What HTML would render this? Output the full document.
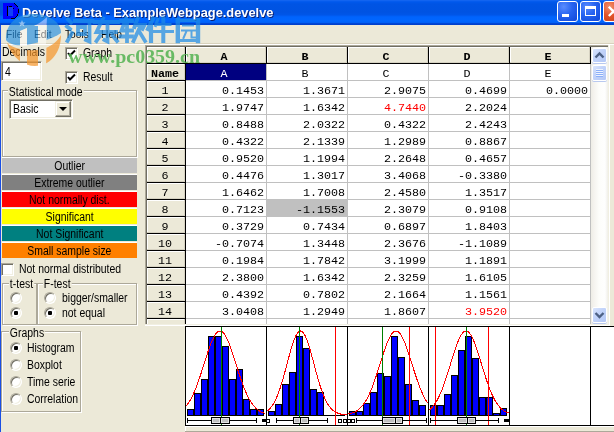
<!DOCTYPE html>
<html><head><meta charset="utf-8">
<style>
*{box-sizing:border-box;margin:0;padding:0}
html,body{width:614px;height:432px;overflow:hidden;background:#ece9d8;position:relative;font-family:"Liberation Sans",sans-serif;font-size:11px;color:#000}
.a{position:absolute}
.t{position:absolute;white-space:nowrap;line-height:13px;font-size:12px;transform:scaleX(0.87);transform-origin:0 0}
#title{left:0;top:0;width:614px;height:25px;background:linear-gradient(to bottom,#1a6af2 0px,#0a5eee 1px,#0058ec 2px,#0054e4 4px,#0053e2 12px,#0056e8 15px,#005ef6 16px,#0064fd 17px,#0066ff 21px,#0060f6 22.5px,#0046d6 23.5px,#003cc8 25px)}
#ttext{left:22px;top:6px;transform:scaleX(0.95);color:#fff;font-weight:bold;font-size:13.5px;letter-spacing:0;text-shadow:1px 1px 0 #0a1e6e}
.wbtn{position:absolute;top:1px;width:21px;height:21px;border:1px solid #fff;border-radius:3px;background:radial-gradient(circle at 30% 25%,#5a8cff 0,#2663f0 45%,#1047d8 100%)}
.grp{position:absolute;border:1px solid #d0d0bf;border-top-color:#d0d0bf;box-shadow:inset 1px 1px 0 #fff}
.bar{position:absolute;left:2px;width:135px;height:17px;border-top:1px solid #fff;border-bottom:1px solid #ece9d8;text-align:center;line-height:15px;font-size:12px}
.bar span{display:inline-block;transform:scaleX(0.87);position:relative;top:1px}
.m{font-size:11px;transform:scaleX(0.93)}
.chk{position:absolute;width:13px;height:13px;background:#fff;border:1px solid;border-color:#aca899 #fff #fff #aca899;box-shadow:inset 1px 1px 0 #716f64,inset -1px -1px 0 #f1efe2}
.rad{position:absolute;width:12px;height:12px;border-radius:50%;background:#fff;border:1px solid;border-color:#aca899 #fff #fff #aca899;box-shadow:inset 1px 1px 0 #716f64,inset -1px -1px 0 #f1efe2}
.rad.on::after{content:"";position:absolute;left:3px;top:3px;width:4px;height:4px;border-radius:1px;background:#000}
#grid{left:145px;top:45px;width:462px;height:280px;overflow:hidden;border-left:1px solid #aca899;border-top:1px solid #aca899;background:#fff}
.cell{position:absolute;font-family:"Liberation Mono",monospace;font-size:11.7px;line-height:13px;white-space:pre;letter-spacing:0}
.b{font-weight:bold}
</style></head><body>
<div id="root" style="position:absolute;left:0;top:0;width:614px;height:432px;overflow:hidden;background:#ece9d8;will-change:transform">
<!-- title bar -->
<div id="title" class="a">
  <svg class="a" style="left:0;top:0" width="24" height="24" shape-rendering="crispEdges"><rect x="3" y="3" width="12" height="1" fill="#0000ff"/><rect x="3" y="4" width="13" height="1" fill="#0000ff"/><rect x="3" y="5" width="14" height="1" fill="#0000ff"/><rect x="3" y="6" width="15" height="1" fill="#0000ff"/><rect x="3" y="7" width="15" height="1" fill="#0000ff"/><rect x="3" y="8" width="16" height="1" fill="#0000ff"/><rect x="3" y="9" width="16" height="1" fill="#0000ff"/><rect x="3" y="10" width="16" height="1" fill="#0000ff"/><rect x="3" y="11" width="16" height="1" fill="#0000ff"/><rect x="3" y="12" width="16" height="1" fill="#0000ff"/><rect x="3" y="13" width="16" height="1" fill="#0000ff"/><rect x="3" y="14" width="15" height="1" fill="#0000ff"/><rect x="3" y="15" width="15" height="1" fill="#0000ff"/><rect x="3" y="16" width="14" height="1" fill="#0000ff"/><rect x="3" y="17" width="13" height="1" fill="#0000ff"/><rect x="3" y="18" width="12" height="1" fill="#0000ff"/><rect x="8" y="7" width="5" height="9" fill="#1040f8"/><rect x="7" y="6" width="1" height="10" fill="#000"/><rect x="9" y="6" width="3" height="1" fill="#000"/><rect x="13" y="8" width="1" height="1" fill="#000"/><rect x="14" y="3" width="1" height="1" fill="#000"/><rect x="15" y="4" width="1" height="1" fill="#000"/><rect x="16" y="5" width="1" height="1" fill="#000"/><rect x="17" y="6" width="1" height="1" fill="#000"/><rect x="18" y="9" width="1" height="4" fill="#000"/><rect x="17" y="14" width="1" height="2" fill="#000"/><rect x="16" y="16" width="1" height="1" fill="#000"/><rect x="15" y="17" width="1" height="1" fill="#000"/><rect x="11" y="18" width="4" height="1" fill="#000"/></svg>
  <div id="ttext" class="t">Develve Beta - ExampleWebpage.develve</div>
  <div class="wbtn" style="left:557px"><div class="a" style="left:4px;top:12px;width:7px;height:3px;background:#fff"></div></div>
  <div class="wbtn" style="left:580px"><div class="a" style="left:4px;top:4px;width:11px;height:10px;border:1px solid #fff;border-top-width:3px"></div></div>
  <div class="wbtn" style="left:603px;background:radial-gradient(circle at 30% 25%,#f39070 0,#e2542a 45%,#c8401a 100%)"><svg class="a" style="left:3px;top:3px" width="14" height="14"><path d="M1.8 1.8 L11 11 M11 1.8 L1.8 11" stroke="#fff" stroke-width="2.3"/></svg></div>
</div>
<!-- left window border -->
<div class="a" style="left:0;top:25px;width:1px;height:407px;background:#1a4fe4"></div>
<!-- menu -->
<div class="t m" style="left:6px;top:28px">File</div>
<div class="t m" style="left:34px;top:28px">Edit</div>
<div class="t m" style="left:65px;top:28px">Tools</div>
<div class="t m" style="left:101px;top:28px">Help</div>
<div class="a" style="left:1px;top:43px;width:613px;height:1px;background:#d8d2bd"></div>
<div class="a" style="left:1px;top:44px;width:613px;height:1px;background:#fff"></div>

<!-- left panel -->
<div class="t" style="left:2px;top:46px">Decimals</div>
<div class="a" style="left:1px;top:61px;width:41px;height:20px;background:#fff;border:1px solid;border-color:#aca899 #fff #fff #aca899;box-shadow:inset 1px 1px 0 #716f64,inset -1px -1px 0 #f1efe2"></div>
<div class="t" style="left:5px;top:66px">4</div>
<div class="chk" style="left:65px;top:47px"></div>
<svg class="a" style="left:65px;top:47px" width="13" height="13"><path d="M3 6 L5 8.5 L10 3.5" stroke="#000" stroke-width="2" fill="none"/></svg>
<div class="t" style="left:83px;top:47px">Graph</div>
<div class="chk" style="left:65px;top:71px"></div>
<svg class="a" style="left:65px;top:71px" width="13" height="13"><path d="M3 6 L5 8.5 L10 3.5" stroke="#000" stroke-width="2" fill="none"/></svg>
<div class="t" style="left:83px;top:71px">Result</div>

<div class="a" style="left:2px;top:90px;width:135px;height:67px;border:1px solid #aca899;box-shadow:1px 1px 0 #fff,inset 1px 1px 0 #fff"></div>
<div class="t" style="left:8px;top:86px;background:#ece9d8;padding:0 1px">Statistical mode</div>
<div class="a" style="left:9px;top:99px;width:64px;height:20px;background:#fff;border:1px solid;border-color:#aca899 #fff #fff #aca899;box-shadow:inset 1px 1px 0 #716f64,inset -1px -1px 0 #f1efe2"></div>
<div class="t" style="left:13px;top:103px">Basic</div>
<div class="a" style="left:55px;top:101px;width:16px;height:16px;background:#ece9d8;border:1px solid;border-color:#f1efe2 #716f64 #716f64 #f1efe2;box-shadow:inset -1px -1px 0 #aca899,inset 1px 1px 0 #fff"></div>
<svg class="a" style="left:55px;top:101px" width="16" height="16"><path d="M4 6 H12 L8 10 Z" fill="#000"/></svg>

<div class="bar" style="top:157px;background:#c0c0c0"><span>Outlier</span></div>
<div class="bar" style="top:174px;background:#808080"><span>Extreme outlier</span></div>
<div class="bar" style="top:191px;background:#ff0000"><span>Not normally dist.</span></div>
<div class="bar" style="top:208px;background:#ffff00"><span>Significant</span></div>
<div class="bar" style="top:225px;background:#008080"><span>Not Significant</span></div>
<div class="bar" style="top:242px;background:#ff8000"><span>Small sample size</span></div>

<div class="chk" style="left:1px;top:263px"></div>
<div class="t" style="left:19px;top:263px">Not normal distributed</div>

<div class="a" style="left:2px;top:283px;width:35px;height:42px;border:1px solid #aca899;box-shadow:1px 1px 0 #fff,inset 1px 1px 0 #fff"></div>
<div class="t" style="left:9px;top:278px;background:#ece9d8;padding:0 1px">t-test</div>
<div class="a" style="left:37px;top:283px;width:100px;height:42px;border:1px solid #aca899;box-shadow:1px 1px 0 #fff,inset 1px 1px 0 #fff"></div>
<div class="t" style="left:43px;top:278px;background:#ece9d8;padding:0 1px">F-test</div>
<div class="rad" style="left:10px;top:292px"></div>
<div class="rad on" style="left:10px;top:307px"></div>
<div class="rad" style="left:44px;top:292px"></div>
<div class="rad on" style="left:44px;top:307px"></div>
<div class="t" style="left:62px;top:292px">bigger/smaller</div>
<div class="t" style="left:62px;top:307px">not equal</div>

<div class="a" style="left:1px;top:331px;width:80px;height:81px;border:1px solid #aca899;box-shadow:1px 1px 0 #fff,inset 1px 1px 0 #fff"></div>
<div class="t" style="left:9px;top:327px;background:#ece9d8;padding:0 1px">Graphs</div>
<div class="rad on" style="left:10px;top:342px"></div>
<div class="rad" style="left:10px;top:359px"></div>
<div class="rad" style="left:10px;top:376px"></div>
<div class="rad" style="left:10px;top:393px"></div>
<div class="t" style="left:27px;top:342px">Histogram</div>
<div class="t" style="left:27px;top:359px">Boxplot</div>
<div class="t" style="left:27px;top:376px">Time serie</div>
<div class="t" style="left:27px;top:393px">Correlation</div>

<!--GRID-->
<div class="a" style="left:145px;top:45px;width:462px;height:280px;background:#fff"></div>
<div class="a" style="left:147px;top:47px;width:38px;height:278px;background:#ece9d8"></div>
<div class="a" style="left:147px;top:47px;width:444px;height:16px;background:#ece9d8"></div>
<div class="a" style="left:186px;top:64px;width:80px;height:16px;background:#000080"></div>
<div class="a" style="left:267px;top:200px;width:80px;height:16px;background:#c0c0c0"></div>
<div class="a" style="left:147px;top:63px;width:444px;height:1px;background:#000"></div>
<div class="a" style="left:186px;top:80px;width:405px;height:1px;background:#c0c0c0"></div>
<div class="a" style="left:147px;top:80px;width:39px;height:1px;background:#000"></div>
<div class="a" style="left:186px;top:97px;width:405px;height:1px;background:#c0c0c0"></div>
<div class="a" style="left:147px;top:97px;width:39px;height:1px;background:#000"></div>
<div class="a" style="left:186px;top:114px;width:405px;height:1px;background:#c0c0c0"></div>
<div class="a" style="left:147px;top:114px;width:39px;height:1px;background:#000"></div>
<div class="a" style="left:186px;top:131px;width:405px;height:1px;background:#c0c0c0"></div>
<div class="a" style="left:147px;top:131px;width:39px;height:1px;background:#000"></div>
<div class="a" style="left:186px;top:148px;width:405px;height:1px;background:#c0c0c0"></div>
<div class="a" style="left:147px;top:148px;width:39px;height:1px;background:#000"></div>
<div class="a" style="left:186px;top:165px;width:405px;height:1px;background:#c0c0c0"></div>
<div class="a" style="left:147px;top:165px;width:39px;height:1px;background:#000"></div>
<div class="a" style="left:186px;top:182px;width:405px;height:1px;background:#c0c0c0"></div>
<div class="a" style="left:147px;top:182px;width:39px;height:1px;background:#000"></div>
<div class="a" style="left:186px;top:199px;width:405px;height:1px;background:#c0c0c0"></div>
<div class="a" style="left:147px;top:199px;width:39px;height:1px;background:#000"></div>
<div class="a" style="left:186px;top:216px;width:405px;height:1px;background:#c0c0c0"></div>
<div class="a" style="left:147px;top:216px;width:39px;height:1px;background:#000"></div>
<div class="a" style="left:186px;top:233px;width:405px;height:1px;background:#c0c0c0"></div>
<div class="a" style="left:147px;top:233px;width:39px;height:1px;background:#000"></div>
<div class="a" style="left:186px;top:250px;width:405px;height:1px;background:#c0c0c0"></div>
<div class="a" style="left:147px;top:250px;width:39px;height:1px;background:#000"></div>
<div class="a" style="left:186px;top:267px;width:405px;height:1px;background:#c0c0c0"></div>
<div class="a" style="left:147px;top:267px;width:39px;height:1px;background:#000"></div>
<div class="a" style="left:186px;top:284px;width:405px;height:1px;background:#c0c0c0"></div>
<div class="a" style="left:147px;top:284px;width:39px;height:1px;background:#000"></div>
<div class="a" style="left:186px;top:301px;width:405px;height:1px;background:#c0c0c0"></div>
<div class="a" style="left:147px;top:301px;width:39px;height:1px;background:#000"></div>
<div class="a" style="left:186px;top:318px;width:405px;height:1px;background:#c0c0c0"></div>
<div class="a" style="left:147px;top:318px;width:39px;height:1px;background:#000"></div>
<div class="a" style="left:185px;top:47px;width:1px;height:16px;background:#000"></div>
<div class="a" style="left:185px;top:47px;width:1px;height:278px;background:#000"></div>
<div class="a" style="left:266px;top:47px;width:1px;height:16px;background:#000"></div>
<div class="a" style="left:266px;top:64px;width:1px;height:261px;background:#c0c0c0"></div>
<div class="a" style="left:347px;top:47px;width:1px;height:16px;background:#000"></div>
<div class="a" style="left:347px;top:64px;width:1px;height:261px;background:#c0c0c0"></div>
<div class="a" style="left:428px;top:47px;width:1px;height:16px;background:#000"></div>
<div class="a" style="left:428px;top:64px;width:1px;height:261px;background:#c0c0c0"></div>
<div class="a" style="left:509px;top:47px;width:1px;height:16px;background:#000"></div>
<div class="a" style="left:509px;top:64px;width:1px;height:261px;background:#c0c0c0"></div>
<div class="a" style="left:590px;top:47px;width:1px;height:16px;background:#000"></div>
<div class="a" style="left:590px;top:64px;width:1px;height:261px;background:#c0c0c0"></div>
<div class="a" style="left:147px;top:47px;width:38px;height:1px;background:#fff"></div>
<div class="a" style="left:147px;top:47px;width:1px;height:16px;background:#fff"></div>
<div class="a" style="left:147px;top:62px;width:38px;height:1px;background:#d6d2c2"></div>
<div class="a" style="left:184px;top:47px;width:1px;height:16px;background:#d6d2c2"></div>
<div class="a" style="left:186px;top:47px;width:80px;height:1px;background:#fff"></div>
<div class="a" style="left:186px;top:47px;width:1px;height:16px;background:#fff"></div>
<div class="a" style="left:186px;top:62px;width:80px;height:1px;background:#d6d2c2"></div>
<div class="a" style="left:265px;top:47px;width:1px;height:16px;background:#d6d2c2"></div>
<div class="a" style="left:267px;top:47px;width:80px;height:1px;background:#fff"></div>
<div class="a" style="left:267px;top:47px;width:1px;height:16px;background:#fff"></div>
<div class="a" style="left:267px;top:62px;width:80px;height:1px;background:#d6d2c2"></div>
<div class="a" style="left:346px;top:47px;width:1px;height:16px;background:#d6d2c2"></div>
<div class="a" style="left:348px;top:47px;width:80px;height:1px;background:#fff"></div>
<div class="a" style="left:348px;top:47px;width:1px;height:16px;background:#fff"></div>
<div class="a" style="left:348px;top:62px;width:80px;height:1px;background:#d6d2c2"></div>
<div class="a" style="left:427px;top:47px;width:1px;height:16px;background:#d6d2c2"></div>
<div class="a" style="left:429px;top:47px;width:80px;height:1px;background:#fff"></div>
<div class="a" style="left:429px;top:47px;width:1px;height:16px;background:#fff"></div>
<div class="a" style="left:429px;top:62px;width:80px;height:1px;background:#d6d2c2"></div>
<div class="a" style="left:508px;top:47px;width:1px;height:16px;background:#d6d2c2"></div>
<div class="a" style="left:510px;top:47px;width:80px;height:1px;background:#fff"></div>
<div class="a" style="left:510px;top:47px;width:1px;height:16px;background:#fff"></div>
<div class="a" style="left:510px;top:62px;width:80px;height:1px;background:#d6d2c2"></div>
<div class="a" style="left:589px;top:47px;width:1px;height:16px;background:#d6d2c2"></div>
<div class="a" style="left:147px;top:64px;width:38px;height:1px;background:#fff"></div>
<div class="a" style="left:147px;top:64px;width:1px;height:16px;background:#fff"></div>
<div class="a" style="left:147px;top:79px;width:38px;height:1px;background:#d6d2c2"></div>
<div class="a" style="left:184px;top:64px;width:1px;height:16px;background:#d6d2c2"></div>
<div class="a" style="left:147px;top:81px;width:38px;height:1px;background:#fff"></div>
<div class="a" style="left:147px;top:81px;width:1px;height:16px;background:#fff"></div>
<div class="a" style="left:147px;top:96px;width:38px;height:1px;background:#d6d2c2"></div>
<div class="a" style="left:184px;top:81px;width:1px;height:16px;background:#d6d2c2"></div>
<div class="a" style="left:147px;top:98px;width:38px;height:1px;background:#fff"></div>
<div class="a" style="left:147px;top:98px;width:1px;height:16px;background:#fff"></div>
<div class="a" style="left:147px;top:113px;width:38px;height:1px;background:#d6d2c2"></div>
<div class="a" style="left:184px;top:98px;width:1px;height:16px;background:#d6d2c2"></div>
<div class="a" style="left:147px;top:115px;width:38px;height:1px;background:#fff"></div>
<div class="a" style="left:147px;top:115px;width:1px;height:16px;background:#fff"></div>
<div class="a" style="left:147px;top:130px;width:38px;height:1px;background:#d6d2c2"></div>
<div class="a" style="left:184px;top:115px;width:1px;height:16px;background:#d6d2c2"></div>
<div class="a" style="left:147px;top:132px;width:38px;height:1px;background:#fff"></div>
<div class="a" style="left:147px;top:132px;width:1px;height:16px;background:#fff"></div>
<div class="a" style="left:147px;top:147px;width:38px;height:1px;background:#d6d2c2"></div>
<div class="a" style="left:184px;top:132px;width:1px;height:16px;background:#d6d2c2"></div>
<div class="a" style="left:147px;top:149px;width:38px;height:1px;background:#fff"></div>
<div class="a" style="left:147px;top:149px;width:1px;height:16px;background:#fff"></div>
<div class="a" style="left:147px;top:164px;width:38px;height:1px;background:#d6d2c2"></div>
<div class="a" style="left:184px;top:149px;width:1px;height:16px;background:#d6d2c2"></div>
<div class="a" style="left:147px;top:166px;width:38px;height:1px;background:#fff"></div>
<div class="a" style="left:147px;top:166px;width:1px;height:16px;background:#fff"></div>
<div class="a" style="left:147px;top:181px;width:38px;height:1px;background:#d6d2c2"></div>
<div class="a" style="left:184px;top:166px;width:1px;height:16px;background:#d6d2c2"></div>
<div class="a" style="left:147px;top:183px;width:38px;height:1px;background:#fff"></div>
<div class="a" style="left:147px;top:183px;width:1px;height:16px;background:#fff"></div>
<div class="a" style="left:147px;top:198px;width:38px;height:1px;background:#d6d2c2"></div>
<div class="a" style="left:184px;top:183px;width:1px;height:16px;background:#d6d2c2"></div>
<div class="a" style="left:147px;top:200px;width:38px;height:1px;background:#fff"></div>
<div class="a" style="left:147px;top:200px;width:1px;height:16px;background:#fff"></div>
<div class="a" style="left:147px;top:215px;width:38px;height:1px;background:#d6d2c2"></div>
<div class="a" style="left:184px;top:200px;width:1px;height:16px;background:#d6d2c2"></div>
<div class="a" style="left:147px;top:217px;width:38px;height:1px;background:#fff"></div>
<div class="a" style="left:147px;top:217px;width:1px;height:16px;background:#fff"></div>
<div class="a" style="left:147px;top:232px;width:38px;height:1px;background:#d6d2c2"></div>
<div class="a" style="left:184px;top:217px;width:1px;height:16px;background:#d6d2c2"></div>
<div class="a" style="left:147px;top:234px;width:38px;height:1px;background:#fff"></div>
<div class="a" style="left:147px;top:234px;width:1px;height:16px;background:#fff"></div>
<div class="a" style="left:147px;top:249px;width:38px;height:1px;background:#d6d2c2"></div>
<div class="a" style="left:184px;top:234px;width:1px;height:16px;background:#d6d2c2"></div>
<div class="a" style="left:147px;top:251px;width:38px;height:1px;background:#fff"></div>
<div class="a" style="left:147px;top:251px;width:1px;height:16px;background:#fff"></div>
<div class="a" style="left:147px;top:266px;width:38px;height:1px;background:#d6d2c2"></div>
<div class="a" style="left:184px;top:251px;width:1px;height:16px;background:#d6d2c2"></div>
<div class="a" style="left:147px;top:268px;width:38px;height:1px;background:#fff"></div>
<div class="a" style="left:147px;top:268px;width:1px;height:16px;background:#fff"></div>
<div class="a" style="left:147px;top:283px;width:38px;height:1px;background:#d6d2c2"></div>
<div class="a" style="left:184px;top:268px;width:1px;height:16px;background:#d6d2c2"></div>
<div class="a" style="left:147px;top:285px;width:38px;height:1px;background:#fff"></div>
<div class="a" style="left:147px;top:285px;width:1px;height:16px;background:#fff"></div>
<div class="a" style="left:147px;top:300px;width:38px;height:1px;background:#d6d2c2"></div>
<div class="a" style="left:184px;top:285px;width:1px;height:16px;background:#d6d2c2"></div>
<div class="a" style="left:147px;top:302px;width:38px;height:1px;background:#fff"></div>
<div class="a" style="left:147px;top:302px;width:1px;height:16px;background:#fff"></div>
<div class="a" style="left:147px;top:317px;width:38px;height:1px;background:#d6d2c2"></div>
<div class="a" style="left:184px;top:302px;width:1px;height:16px;background:#d6d2c2"></div>
<div class="a" style="left:147px;top:319px;width:38px;height:1px;background:#fff"></div>
<div class="a" style="left:147px;top:319px;width:1px;height:6px;background:#fff"></div>
<div class="a" style="left:184px;top:319px;width:1px;height:6px;background:#d6d2c2"></div>
<div class="cell b" style="left:184px;top:51px;width:80px;text-align:center">A</div>
<div class="cell" style="left:184px;top:68px;width:80px;text-align:center;color:#fff">A</div>
<div class="cell b" style="left:265px;top:51px;width:80px;text-align:center">B</div>
<div class="cell" style="left:265px;top:68px;width:80px;text-align:center;color:#000">B</div>
<div class="cell b" style="left:346px;top:51px;width:80px;text-align:center">C</div>
<div class="cell" style="left:346px;top:68px;width:80px;text-align:center;color:#000">C</div>
<div class="cell b" style="left:427px;top:51px;width:80px;text-align:center">D</div>
<div class="cell" style="left:427px;top:68px;width:80px;text-align:center;color:#000">D</div>
<div class="cell b" style="left:508px;top:51px;width:80px;text-align:center">E</div>
<div class="cell" style="left:508px;top:68px;width:80px;text-align:center;color:#000">E</div>
<div class="cell b" style="left:146px;top:68px;width:38px;text-align:center">Name</div>
<div class="cell" style="left:146px;top:85px;width:38px;text-align:center">1</div>
<div class="cell" style="left:186px;top:85px;width:78px;text-align:right">0.1453</div>
<div class="cell" style="left:267px;top:85px;width:78px;text-align:right">1.3671</div>
<div class="cell" style="left:348px;top:85px;width:78px;text-align:right">2.9075</div>
<div class="cell" style="left:429px;top:85px;width:78px;text-align:right">0.4699</div>
<div class="cell" style="left:510px;top:85px;width:78px;text-align:right">0.0000</div>
<div class="cell" style="left:146px;top:102px;width:38px;text-align:center">2</div>
<div class="cell" style="left:186px;top:102px;width:78px;text-align:right">1.9747</div>
<div class="cell" style="left:267px;top:102px;width:78px;text-align:right">1.6342</div>
<div class="cell" style="left:348px;top:102px;width:78px;text-align:right;color:#ff0000">4.7440</div>
<div class="cell" style="left:429px;top:102px;width:78px;text-align:right">2.2024</div>
<div class="cell" style="left:146px;top:119px;width:38px;text-align:center">3</div>
<div class="cell" style="left:186px;top:119px;width:78px;text-align:right">0.8488</div>
<div class="cell" style="left:267px;top:119px;width:78px;text-align:right">2.0322</div>
<div class="cell" style="left:348px;top:119px;width:78px;text-align:right">0.4322</div>
<div class="cell" style="left:429px;top:119px;width:78px;text-align:right">2.4243</div>
<div class="cell" style="left:146px;top:136px;width:38px;text-align:center">4</div>
<div class="cell" style="left:186px;top:136px;width:78px;text-align:right">0.4322</div>
<div class="cell" style="left:267px;top:136px;width:78px;text-align:right">2.1339</div>
<div class="cell" style="left:348px;top:136px;width:78px;text-align:right">1.2989</div>
<div class="cell" style="left:429px;top:136px;width:78px;text-align:right">0.8867</div>
<div class="cell" style="left:146px;top:153px;width:38px;text-align:center">5</div>
<div class="cell" style="left:186px;top:153px;width:78px;text-align:right">0.9520</div>
<div class="cell" style="left:267px;top:153px;width:78px;text-align:right">1.1994</div>
<div class="cell" style="left:348px;top:153px;width:78px;text-align:right">2.2648</div>
<div class="cell" style="left:429px;top:153px;width:78px;text-align:right">0.4657</div>
<div class="cell" style="left:146px;top:170px;width:38px;text-align:center">6</div>
<div class="cell" style="left:186px;top:170px;width:78px;text-align:right">0.4476</div>
<div class="cell" style="left:267px;top:170px;width:78px;text-align:right">1.3017</div>
<div class="cell" style="left:348px;top:170px;width:78px;text-align:right">3.4068</div>
<div class="cell" style="left:429px;top:170px;width:78px;text-align:right">-0.3380</div>
<div class="cell" style="left:146px;top:187px;width:38px;text-align:center">7</div>
<div class="cell" style="left:186px;top:187px;width:78px;text-align:right">1.6462</div>
<div class="cell" style="left:267px;top:187px;width:78px;text-align:right">1.7008</div>
<div class="cell" style="left:348px;top:187px;width:78px;text-align:right">2.4580</div>
<div class="cell" style="left:429px;top:187px;width:78px;text-align:right">1.3517</div>
<div class="cell" style="left:146px;top:204px;width:38px;text-align:center">8</div>
<div class="cell" style="left:186px;top:204px;width:78px;text-align:right">0.7123</div>
<div class="cell" style="left:267px;top:204px;width:78px;text-align:right">-1.1553</div>
<div class="cell" style="left:348px;top:204px;width:78px;text-align:right">2.3079</div>
<div class="cell" style="left:429px;top:204px;width:78px;text-align:right">0.9108</div>
<div class="cell" style="left:146px;top:221px;width:38px;text-align:center">9</div>
<div class="cell" style="left:186px;top:221px;width:78px;text-align:right">0.3729</div>
<div class="cell" style="left:267px;top:221px;width:78px;text-align:right">0.7434</div>
<div class="cell" style="left:348px;top:221px;width:78px;text-align:right">0.6897</div>
<div class="cell" style="left:429px;top:221px;width:78px;text-align:right">1.8403</div>
<div class="cell" style="left:146px;top:238px;width:38px;text-align:center">10</div>
<div class="cell" style="left:186px;top:238px;width:78px;text-align:right">-0.7074</div>
<div class="cell" style="left:267px;top:238px;width:78px;text-align:right">1.3448</div>
<div class="cell" style="left:348px;top:238px;width:78px;text-align:right">2.3676</div>
<div class="cell" style="left:429px;top:238px;width:78px;text-align:right">-1.1089</div>
<div class="cell" style="left:146px;top:255px;width:38px;text-align:center">11</div>
<div class="cell" style="left:186px;top:255px;width:78px;text-align:right">0.1984</div>
<div class="cell" style="left:267px;top:255px;width:78px;text-align:right">1.7842</div>
<div class="cell" style="left:348px;top:255px;width:78px;text-align:right">3.1999</div>
<div class="cell" style="left:429px;top:255px;width:78px;text-align:right">1.1891</div>
<div class="cell" style="left:146px;top:272px;width:38px;text-align:center">12</div>
<div class="cell" style="left:186px;top:272px;width:78px;text-align:right">2.3800</div>
<div class="cell" style="left:267px;top:272px;width:78px;text-align:right">1.6342</div>
<div class="cell" style="left:348px;top:272px;width:78px;text-align:right">2.3259</div>
<div class="cell" style="left:429px;top:272px;width:78px;text-align:right">1.6105</div>
<div class="cell" style="left:146px;top:289px;width:38px;text-align:center">13</div>
<div class="cell" style="left:186px;top:289px;width:78px;text-align:right">0.4392</div>
<div class="cell" style="left:267px;top:289px;width:78px;text-align:right">0.7802</div>
<div class="cell" style="left:348px;top:289px;width:78px;text-align:right">2.1664</div>
<div class="cell" style="left:429px;top:289px;width:78px;text-align:right">1.1561</div>
<div class="cell" style="left:146px;top:306px;width:38px;text-align:center">14</div>
<div class="cell" style="left:186px;top:306px;width:78px;text-align:right">3.0408</div>
<div class="cell" style="left:267px;top:306px;width:78px;text-align:right">1.2949</div>
<div class="cell" style="left:348px;top:306px;width:78px;text-align:right">1.8607</div>
<div class="cell" style="left:429px;top:306px;width:78px;text-align:right;color:#ff0000">3.9520</div>
<div class="a" style="left:145px;top:45px;width:464px;height:1px;background:#aca899"></div>
<div class="a" style="left:145px;top:45px;width:1px;height:280px;background:#aca899"></div>
<div class="a" style="left:146px;top:46px;width:462px;height:1px;background:#716f64"></div>
<div class="a" style="left:146px;top:46px;width:1px;height:279px;background:#716f64"></div>
<!--/GRID-->
<!--SCROLL-->
<div class="a" style="left:591px;top:47px;width:17px;height:277px;background:linear-gradient(to right,#eeede5 0,#f3f1ec 2px,#fdfdfa 8px,#fefefe 14px,#f0efe8 17px)"></div>
<div class="a" style="left:592px;top:48px;width:15px;height:15px;border-radius:2px;border:1px solid #fff;background:linear-gradient(135deg,#dae5fc 0,#c3d4fa 40%,#b4c8f6 100%);box-shadow:0 1px 0 #b9c9ef"></div>
<svg class="a" style="left:592px;top:48px" width="15" height="15"><path d="M3.5 9.5 L7.5 5.5 L11.5 9.5" stroke="#4d6185" stroke-width="2.4" fill="none"/></svg>
<div class="a" style="left:592px;top:65px;width:15px;height:16px;border-radius:2px;border:1px solid #fff;background:linear-gradient(135deg,#dae5fc 0,#c3d4fa 40%,#b4c8f6 100%);box-shadow:0 1px 0 #b9c9ef"></div>
<div class="a" style="left:596px;top:69px;width:7px;height:1px;background:#eef3fe;box-shadow:0 1px 0 #8cb0f8,0 2px 0 #eef3fe,0 3px 0 #8cb0f8,0 4px 0 #eef3fe,0 5px 0 #8cb0f8,0 6px 0 #eef3fe,0 7px 0 #8cb0f8"></div>
<div class="a" style="left:592px;top:307px;width:15px;height:16px;border-radius:2px;border:1px solid #fff;background:linear-gradient(135deg,#dae5fc 0,#c3d4fa 40%,#b4c8f6 100%);box-shadow:0 1px 0 #b9c9ef"></div>
<svg class="a" style="left:592px;top:307px" width="15" height="16"><path d="M3.5 6 L7.5 10 L11.5 6" stroke="#4d6185" stroke-width="2.4" fill="none"/></svg>
<div class="a" style="left:608px;top:45px;width:1px;height:280px;background:#f1efe2"></div>
<div class="a" style="left:609px;top:45px;width:1px;height:281px;background:#fff"></div>
<div class="a" style="left:145px;top:324px;width:464px;height:1px;background:#f1efe2"></div>
<div class="a" style="left:145px;top:325px;width:465px;height:1px;background:#fff"></div>

<!--/SCROLL-->
<!--CHART-->
<svg class="a" style="left:0;top:0" width="614" height="432" shape-rendering="crispEdges">
<rect x="185" y="326" width="429" height="100" fill="#fff"/>
<rect x="185" y="426" width="429" height="1" fill="#fff"/>
<rect x="185" y="426" width="1" height="6" fill="#fff"/>
<rect x="185" y="431" width="429" height="1" fill="#aca899"/>
<rect x="187.5" y="409.5" width="6" height="6" fill="#0000ff" stroke="#000" stroke-width="1"/>
<rect x="194.5" y="393.5" width="6" height="22" fill="#0000ff" stroke="#000" stroke-width="1"/>
<rect x="201.5" y="379.5" width="6" height="36" fill="#0000ff" stroke="#000" stroke-width="1"/>
<rect x="208.5" y="336.5" width="6" height="79" fill="#0000ff" stroke="#000" stroke-width="1"/>
<rect x="215.5" y="336.5" width="6" height="79" fill="#0000ff" stroke="#000" stroke-width="1"/>
<rect x="222.5" y="346.5" width="6" height="69" fill="#0000ff" stroke="#000" stroke-width="1"/>
<rect x="229.5" y="379.5" width="6" height="36" fill="#0000ff" stroke="#000" stroke-width="1"/>
<rect x="236.5" y="369.5" width="6" height="46" fill="#0000ff" stroke="#000" stroke-width="1"/>
<rect x="243.5" y="399.5" width="6" height="16" fill="#0000ff" stroke="#000" stroke-width="1"/>
<rect x="250.5" y="409.5" width="6" height="6" fill="#0000ff" stroke="#000" stroke-width="1"/>
<rect x="257.5" y="409.5" width="6" height="6" fill="#0000ff" stroke="#000" stroke-width="1"/>
<polyline points="186.5,405.6 187.5,404.3 188.5,402.9 189.5,401.3 190.5,399.7 191.5,397.8 192.5,395.8 193.5,393.7 194.5,391.4 195.5,389.0 196.5,386.4 197.5,383.7 198.5,380.9 199.5,378.0 200.5,375.0 201.5,372.0 202.5,368.8 203.5,365.6 204.5,362.5 205.5,359.3 206.5,356.2 207.5,353.1 208.5,350.1 209.5,347.3 210.5,344.6 211.5,342.1 212.5,339.7 213.5,337.7 214.5,335.8 215.5,334.3 216.5,333.0 217.5,332.0 218.5,331.4 219.5,331.0 220.5,331.0 221.5,331.4 222.5,332.0 223.5,333.0 224.5,334.3 225.5,335.8 226.5,337.7 227.5,339.7 228.5,342.1 229.5,344.6 230.5,347.3 231.5,350.1 232.5,353.1 233.5,356.2 234.5,359.3 235.5,362.5 236.5,365.6 237.5,368.8 238.5,372.0 239.5,375.0 240.5,378.0 241.5,380.9 242.5,383.7 243.5,386.4 244.5,389.0 245.5,391.4 246.5,393.7 247.5,395.8 248.5,397.8 249.5,399.7 250.5,401.3 251.5,402.9 252.5,404.3 253.5,405.6 254.5,406.8 255.5,407.8 256.5,408.8 257.5,409.6 258.5,410.4 259.5,411.0 260.5,411.6 261.5,412.1 262.5,412.5 263.5,412.9 264.5,413.2 265.5,413.5" fill="none" stroke="#ff0000" stroke-width="1" shape-rendering="crispEdges"/>
<rect x="221" y="327" width="1" height="98" fill="#008000"/>
<rect x="187" y="420" width="70" height="1" fill="#000"/>
<rect x="187" y="418" width="1" height="5" fill="#000"/>
<rect x="256" y="418" width="1" height="5" fill="#000"/>
<rect x="211" y="417" width="19" height="7" fill="#000"/>
<rect x="212" y="418" width="8" height="5" fill="#e4e4e4"/>
<rect x="213" y="419" width="6" height="3" fill="#c0c0c0"/>
<rect x="221" y="418" width="8" height="5" fill="#e4e4e4"/>
<rect x="222" y="419" width="6" height="3" fill="#c0c0c0"/>
<rect x="262" y="419" width="4" height="3" fill="#000"/>
<rect x="268.5" y="411.5" width="6" height="4" fill="#0000ff" stroke="#000" stroke-width="1"/>
<rect x="275.5" y="404.5" width="6" height="11" fill="#0000ff" stroke="#000" stroke-width="1"/>
<rect x="282.5" y="384.5" width="6" height="31" fill="#0000ff" stroke="#000" stroke-width="1"/>
<rect x="289.5" y="372.5" width="6" height="43" fill="#0000ff" stroke="#000" stroke-width="1"/>
<rect x="296.5" y="336.5" width="6" height="79" fill="#0000ff" stroke="#000" stroke-width="1"/>
<rect x="303.5" y="348.5" width="6" height="67" fill="#0000ff" stroke="#000" stroke-width="1"/>
<rect x="310.5" y="389.5" width="6" height="26" fill="#0000ff" stroke="#000" stroke-width="1"/>
<rect x="317.5" y="392.5" width="6" height="23" fill="#0000ff" stroke="#000" stroke-width="1"/>
<rect x="324" y="415" width="7" height="1" fill="#000"/>
<rect x="331" y="415" width="7" height="1" fill="#000"/>
<rect x="338" y="415" width="7" height="1" fill="#000"/>
<polyline points="267.5,410.8 268.5,409.9 269.5,409.0 270.5,407.9 271.5,406.6 272.5,405.2 273.5,403.6 274.5,401.9 275.5,399.9 276.5,397.7 277.5,395.3 278.5,392.7 279.5,389.9 280.5,387.0 281.5,383.8 282.5,380.5 283.5,377.0 284.5,373.4 285.5,369.7 286.5,365.9 287.5,362.2 288.5,358.4 289.5,354.7 290.5,351.2 291.5,347.7 292.5,344.5 293.5,341.6 294.5,338.9 295.5,336.6 296.5,334.6 297.5,333.0 298.5,331.9 299.5,331.2 300.5,331.0 301.5,331.2 302.5,331.9 303.5,333.0 304.5,334.6 305.5,336.6 306.5,338.9 307.5,341.6 308.5,344.5 309.5,347.7 310.5,351.2 311.5,354.7 312.5,358.4 313.5,362.2 314.5,365.9 315.5,369.7 316.5,373.4 317.5,377.0 318.5,380.5 319.5,383.8 320.5,387.0 321.5,389.9 322.5,392.7 323.5,395.3 324.5,397.7 325.5,399.9 326.5,401.9 327.5,403.6 328.5,405.2 329.5,406.6 330.5,407.9 331.5,409.0 332.5,409.9 333.5,410.8 334.5,411.5 335.5,412.1 336.5,412.6 337.5,413.0 338.5,413.4 339.5,413.7 340.5,414.0 341.5,414.2 342.5,414.3 343.5,414.5 344.5,414.6 345.5,414.7 346.5,414.7" fill="none" stroke="#ff0000" stroke-width="1" shape-rendering="crispEdges"/>
<rect x="335" y="327" width="1" height="98" fill="#ff0000"/>
<rect x="299" y="327" width="1" height="98" fill="#008000"/>
<rect x="276" y="420" width="52" height="1" fill="#000"/>
<rect x="276" y="418" width="1" height="5" fill="#000"/>
<rect x="327" y="418" width="1" height="5" fill="#000"/>
<rect x="293" y="417" width="16" height="7" fill="#000"/>
<rect x="294" y="418" width="6" height="5" fill="#e4e4e4"/>
<rect x="295" y="419" width="4" height="3" fill="#c0c0c0"/>
<rect x="301" y="418" width="7" height="5" fill="#e4e4e4"/>
<rect x="302" y="419" width="5" height="3" fill="#c0c0c0"/>
<rect x="266.5" y="419.5" width="3" height="3" fill="#fff" stroke="#000" stroke-width="1"/>
<rect x="338.5" y="419.5" width="3" height="3" fill="#fff" stroke="#000" stroke-width="1"/>
<rect x="343.5" y="419.5" width="3" height="3" fill="#fff" stroke="#000" stroke-width="1"/>
<rect x="349.5" y="411.5" width="6" height="4" fill="#0000ff" stroke="#000" stroke-width="1"/>
<rect x="356.5" y="411.5" width="6" height="4" fill="#0000ff" stroke="#000" stroke-width="1"/>
<rect x="363.5" y="403.5" width="6" height="12" fill="#0000ff" stroke="#000" stroke-width="1"/>
<rect x="370.5" y="392.5" width="6" height="23" fill="#0000ff" stroke="#000" stroke-width="1"/>
<rect x="377.5" y="373.5" width="6" height="42" fill="#0000ff" stroke="#000" stroke-width="1"/>
<rect x="384.5" y="376.5" width="6" height="39" fill="#0000ff" stroke="#000" stroke-width="1"/>
<rect x="391.5" y="336.5" width="6" height="79" fill="#0000ff" stroke="#000" stroke-width="1"/>
<rect x="398.5" y="357.5" width="6" height="58" fill="#0000ff" stroke="#000" stroke-width="1"/>
<rect x="405.5" y="384.5" width="6" height="31" fill="#0000ff" stroke="#000" stroke-width="1"/>
<rect x="412.5" y="400.5" width="6" height="15" fill="#0000ff" stroke="#000" stroke-width="1"/>
<rect x="419.5" y="405.5" width="6" height="10" fill="#0000ff" stroke="#000" stroke-width="1"/>
<polyline points="348.5,414.0 349.5,413.8 350.5,413.5 351.5,413.2 352.5,412.9 353.5,412.5 354.5,412.1 355.5,411.6 356.5,411.0 357.5,410.4 358.5,409.6 359.5,408.8 360.5,407.8 361.5,406.8 362.5,405.6 363.5,404.3 364.5,402.9 365.5,401.3 366.5,399.7 367.5,397.8 368.5,395.8 369.5,393.7 370.5,391.4 371.5,389.0 372.5,386.4 373.5,383.7 374.5,380.9 375.5,378.0 376.5,375.0 377.5,372.0 378.5,368.8 379.5,365.6 380.5,362.5 381.5,359.3 382.5,356.2 383.5,353.1 384.5,350.1 385.5,347.3 386.5,344.6 387.5,342.1 388.5,339.7 389.5,337.7 390.5,335.8 391.5,334.3 392.5,333.0 393.5,332.0 394.5,331.4 395.5,331.0 396.5,331.0 397.5,331.4 398.5,332.0 399.5,333.0 400.5,334.3 401.5,335.8 402.5,337.7 403.5,339.7 404.5,342.1 405.5,344.6 406.5,347.3 407.5,350.1 408.5,353.1 409.5,356.2 410.5,359.3 411.5,362.5 412.5,365.6 413.5,368.8 414.5,372.0 415.5,375.0 416.5,378.0 417.5,380.9 418.5,383.7 419.5,386.4 420.5,389.0 421.5,391.4 422.5,393.7 423.5,395.8 424.5,397.8 425.5,399.7 426.5,401.3 427.5,402.9" fill="none" stroke="#ff0000" stroke-width="1" shape-rendering="crispEdges"/>
<rect x="409" y="327" width="1" height="98" fill="#ff0000"/>
<rect x="382" y="327" width="1" height="98" fill="#008000"/>
<rect x="356" y="420" width="71" height="1" fill="#000"/>
<rect x="356" y="418" width="1" height="5" fill="#000"/>
<rect x="426" y="418" width="1" height="5" fill="#000"/>
<rect x="382" y="417" width="21" height="7" fill="#000"/>
<rect x="383" y="418" width="12" height="5" fill="#e4e4e4"/>
<rect x="384" y="419" width="10" height="3" fill="#c0c0c0"/>
<rect x="396" y="418" width="6" height="5" fill="#e4e4e4"/>
<rect x="397" y="419" width="4" height="3" fill="#c0c0c0"/>
<rect x="347.5" y="419.5" width="3" height="3" fill="#fff" stroke="#000" stroke-width="1"/>
<rect x="351.5" y="419.5" width="3" height="3" fill="#fff" stroke="#000" stroke-width="1"/>
<rect x="430.5" y="405.5" width="6" height="10" fill="#0000ff" stroke="#000" stroke-width="1"/>
<rect x="437.5" y="405.5" width="6" height="10" fill="#0000ff" stroke="#000" stroke-width="1"/>
<rect x="444.5" y="394.5" width="6" height="21" fill="#0000ff" stroke="#000" stroke-width="1"/>
<rect x="451.5" y="375.5" width="6" height="40" fill="#0000ff" stroke="#000" stroke-width="1"/>
<rect x="458.5" y="350.5" width="6" height="65" fill="#0000ff" stroke="#000" stroke-width="1"/>
<rect x="465.5" y="336.5" width="6" height="79" fill="#0000ff" stroke="#000" stroke-width="1"/>
<rect x="472.5" y="358.5" width="6" height="57" fill="#0000ff" stroke="#000" stroke-width="1"/>
<rect x="479.5" y="397.5" width="6" height="18" fill="#0000ff" stroke="#000" stroke-width="1"/>
<rect x="486.5" y="397.5" width="6" height="18" fill="#0000ff" stroke="#000" stroke-width="1"/>
<rect x="493.5" y="413.5" width="6" height="2" fill="#0000ff" stroke="#000" stroke-width="1"/>
<rect x="500.5" y="408.5" width="6" height="7" fill="#0000ff" stroke="#000" stroke-width="1"/>
<polyline points="429.5,409.8 430.5,408.9 431.5,407.9 432.5,406.9 433.5,405.7 434.5,404.3 435.5,402.9 436.5,401.3 437.5,399.5 438.5,397.6 439.5,395.5 440.5,393.3 441.5,390.9 442.5,388.4 443.5,385.7 444.5,382.9 445.5,380.0 446.5,376.9 447.5,373.8 448.5,370.6 449.5,367.3 450.5,364.1 451.5,360.8 452.5,357.5 453.5,354.3 454.5,351.2 455.5,348.2 456.5,345.4 457.5,342.7 458.5,340.3 459.5,338.1 460.5,336.1 461.5,334.5 462.5,333.1 463.5,332.1 464.5,331.4 465.5,331.0 466.5,331.0 467.5,331.4 468.5,332.1 469.5,333.1 470.5,334.5 471.5,336.1 472.5,338.1 473.5,340.3 474.5,342.7 475.5,345.4 476.5,348.2 477.5,351.2 478.5,354.3 479.5,357.5 480.5,360.8 481.5,364.1 482.5,367.3 483.5,370.6 484.5,373.8 485.5,376.9 486.5,380.0 487.5,382.9 488.5,385.7 489.5,388.4 490.5,390.9 491.5,393.3 492.5,395.5 493.5,397.6 494.5,399.5 495.5,401.3 496.5,402.9 497.5,404.3 498.5,405.7 499.5,406.9 500.5,407.9 501.5,408.9 502.5,409.8 503.5,410.5 504.5,411.2 505.5,411.7 506.5,412.2 507.5,412.7 508.5,413.0" fill="none" stroke="#ff0000" stroke-width="1" shape-rendering="crispEdges"/>
<rect x="435" y="327" width="1" height="98" fill="#ff0000"/>
<rect x="488" y="327" width="1" height="98" fill="#ff0000"/>
<rect x="466" y="327" width="1" height="98" fill="#008000"/>
<rect x="430" y="420" width="69" height="1" fill="#000"/>
<rect x="430" y="418" width="1" height="5" fill="#000"/>
<rect x="498" y="418" width="1" height="5" fill="#000"/>
<rect x="457" y="417" width="19" height="7" fill="#000"/>
<rect x="458" y="418" width="9" height="5" fill="#e4e4e4"/>
<rect x="459" y="419" width="7" height="3" fill="#c0c0c0"/>
<rect x="468" y="418" width="7" height="5" fill="#e4e4e4"/>
<rect x="469" y="419" width="5" height="3" fill="#c0c0c0"/>
<rect x="504" y="419" width="5" height="3" fill="#000"/>
<rect x="185" y="326" width="429" height="1" fill="#000"/>
<rect x="185" y="425" width="429" height="1" fill="#000"/>
<rect x="185" y="326" width="1" height="100" fill="#000"/>
<rect x="266" y="326" width="1" height="100" fill="#000"/>
<rect x="347" y="326" width="1" height="100" fill="#000"/>
<rect x="428" y="326" width="1" height="100" fill="#000"/>
<rect x="509" y="326" width="1" height="100" fill="#000"/>
<rect x="590" y="326" width="1" height="100" fill="#000"/>
</svg>
<!--/CHART-->
<!--WM-->
<svg class="a" style="left:0;top:0" width="614" height="432">
<defs><mask id="bars"><rect x="0" y="0" width="80" height="80" fill="#fff"/><path d="M20 31 L27 28 L27 70 L20 70 Z M47 17 C43 21 38 24 34 26 L38 26 L38 70 L46 70 Z" fill="#000"/></mask></defs>
<g mask="url(#bars)">
<path d="M6 40 C5 24 17 14 33 14 C49 14 61 22 61 33 C52 39 38 43 25 45 C15 46 9 44 6 40 Z" fill="#2a90e0" opacity="0.68"/>
<path d="M7 43 C12 58 24 66 35 66 C50 66 61 53 61 35 C56 44 47 49 37 50 C26 51 14 49 7 43 Z" fill="#f4962c" opacity="0.72"/>
</g>
<g opacity="0.5" fill="#fff">
<path d="M20 31 L27 28 L27 46 L20 46 Z"/>
<path d="M47 17 C43 21 38 24 34 26 L38 26 L38 44 L46 44 Z"/>
<path d="M22 20 l1 2.5 l2.5 0 l-2 1.5 l1 2.5 l-2.5 -1.5 l-2.5 1.5 l1 -2.5 l-2 -1.5 l2.5 0 Z"/>
</g>
<g opacity="0.72" stroke="#1e8ce6" stroke-width="3.8" fill="none" stroke-linecap="square" stroke-linejoin="miter">
<path d="M68 19.5 L71 22.5 M67 26.5 L70 29 M67.5 41 L72 33"/>
<path d="M75 21 H92.5 M89.5 21 V41.5 L86 40"/>
<path d="M78 27 H85 V34 H78 Z"/>
<path d="M94.5 22 H118 M103 18.5 L96.5 32 H116 M107.5 23 V41.5 L104.5 40 M100 36 L96.5 41 M112.5 35.5 L117 41"/>
<path d="M121 21 H132 M126 18.5 L121.5 30.5 H132 M127 25 V41 M120.5 36.5 H132"/>
<path d="M137.5 18.5 L134.5 27 M135.5 25 H144.5 L142.5 29 M139.5 28 L133.5 41 M139.5 32 L145 41"/>
<path d="M153 18.5 L148 29 M151 25 V41" stroke-width="4.2"/>
<path d="M158 19 L155.5 25.5 M156 24.5 H170 M154 31.5 H172.5" stroke-width="3"/><path d="M163.3 18.5 V41" stroke-width="4"/>
<path d="M177.8 20 V41 M198 20 V41" stroke-width="4.4"/><path d="M178 20.5 H198 M178 40.5 H198" stroke-width="2.8"/><path d="M183 25.5 H193 M182 30.5 H195 M186.5 31 L183.5 38 M191.5 31 V37.5 H195" stroke-width="2"/>
</g>
<text x="68" y="63" font-family="Liberation Serif" font-weight="bold" font-size="18.5" fill="#58b455" opacity="0.88" transform="translate(68 0) scale(1.08 1) translate(-68 0)">www.pc0359.cn</text>
</svg>

<!--/WM-->
</div>
</body></html>
